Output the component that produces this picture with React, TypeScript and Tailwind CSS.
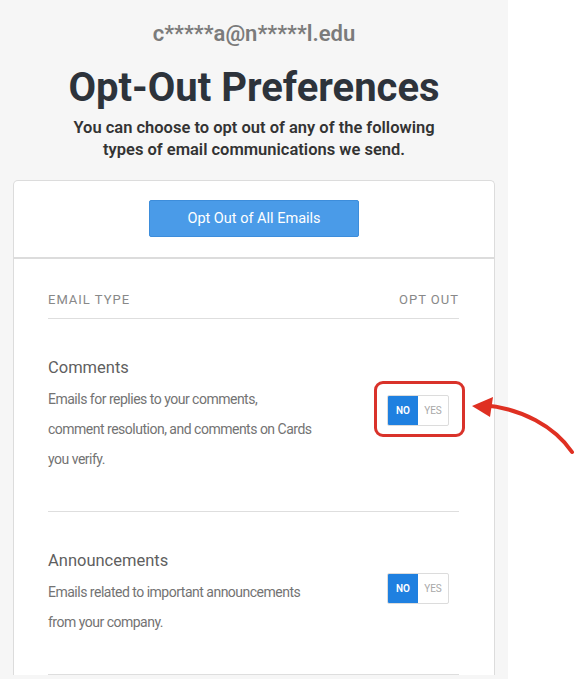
import React from "react";

function Toggle({ highlight }: { highlight?: boolean }) {
  return (
    <div className="relative mb-[9px] mr-[10px] shrink-0">
      <div className="flex h-[31px] w-[62px] overflow-hidden rounded-[2px] border border-[#dcdcdc] bg-white text-[10px] font-semibold">
        <div className="flex w-[30px] items-center justify-center bg-[#1f80e0] text-white">NO</div>
        <div className="flex flex-1 items-center justify-center font-normal text-[#a8a8a8]">YES</div>
      </div>
      {highlight && (
        <div className="pointer-events-none absolute left-[-13px] top-[-14px] h-[56px] w-[91px] rounded-[9px] border-[3px] border-[#d9322a]" />
      )}
    </div>
  );
}

function Item({
  title,
  lines,
  highlight,
}: {
  title: string;
  lines: string[];
  highlight?: boolean;
}) {
  return (
    <div className="flex items-center justify-between border-b border-[#dedede] pb-[37px] pt-[37px]">
      <div>
        <div className="text-[16.5px] leading-[24px] text-[#5f5f5f]">{title}</div>
        <div className="mt-[4px] text-[14px] leading-[30px] tracking-[-0.5px] text-[#737373]">
          {lines.map((l) => (
            <div key={l}>{l}</div>
          ))}
        </div>
      </div>
      <Toggle highlight={highlight} />
    </div>
  );
}

export default function App() {
  return (
    <div
      className="relative flex min-h-[679px] w-[575px] overflow-hidden bg-white"
      style={{ fontFamily: "Roboto, 'Noto Sans', sans-serif" }}
    >
      <div className="flex w-[508px] flex-col items-center bg-[#f6f6f6] px-[13px]">
        <div className="mt-[21px] text-[22px] font-semibold leading-[26px] text-[#7b7b7b]">
          c*****a@n*****l.edu
        </div>
        <h1 className="mt-[19px] text-[40px] font-bold leading-[44px] text-[#2d333b]">
          Opt-Out Preferences
        </h1>
        <p className="mt-[7px] text-center text-[16.5px] font-semibold leading-[22px] text-[#333]">
          You can choose to opt out of any of the following
          <br />
          types of email communications we send.
        </p>
        <div className="mt-[19px] w-full rounded-t-[5px] border border-b-0 border-[#dcdcdc] bg-white">
          <div className="flex justify-center border-b-2 border-[#dcdcdc] pb-[20px] pt-[19px]">
            <button className="h-[37px] w-[210px] rounded-[2px] border border-[#3d8ddb] bg-[#4a9be8] text-[14.5px] text-white">
              Opt Out of All Emails
            </button>
          </div>
          <div className="pl-[34px] pr-[35px]">
            <div className="flex justify-between border-b border-[#dedede] pb-[9px] pt-[32px] text-[13px] leading-[18px] tracking-[1px] text-[#888]">
              <span>EMAIL TYPE</span>
              <span>OPT OUT</span>
            </div>
            <Item
              title="Comments"
              lines={[
                "Emails for replies to your comments,",
                "comment resolution, and comments on Cards",
                "you verify.",
              ]}
              highlight
            />
            <Item
              title="Announcements"
              lines={["Emails related to important announcements", "from your company."]}
            />
          </div>
        </div>
      </div>
      <svg
        className="pointer-events-none absolute left-[460px] top-[380px]"
        width="115"
        height="80"
        viewBox="0 0 115 80"
      >
        <path
          d="M112 72 C 95 47, 62 28, 22 25"
          fill="none"
          stroke="#df3022"
          strokeWidth="4"
          strokeLinecap="round"
        />
        <polygon points="12,26 33,17 30,37" fill="#df3022" />
      </svg>
    </div>
  );
}
